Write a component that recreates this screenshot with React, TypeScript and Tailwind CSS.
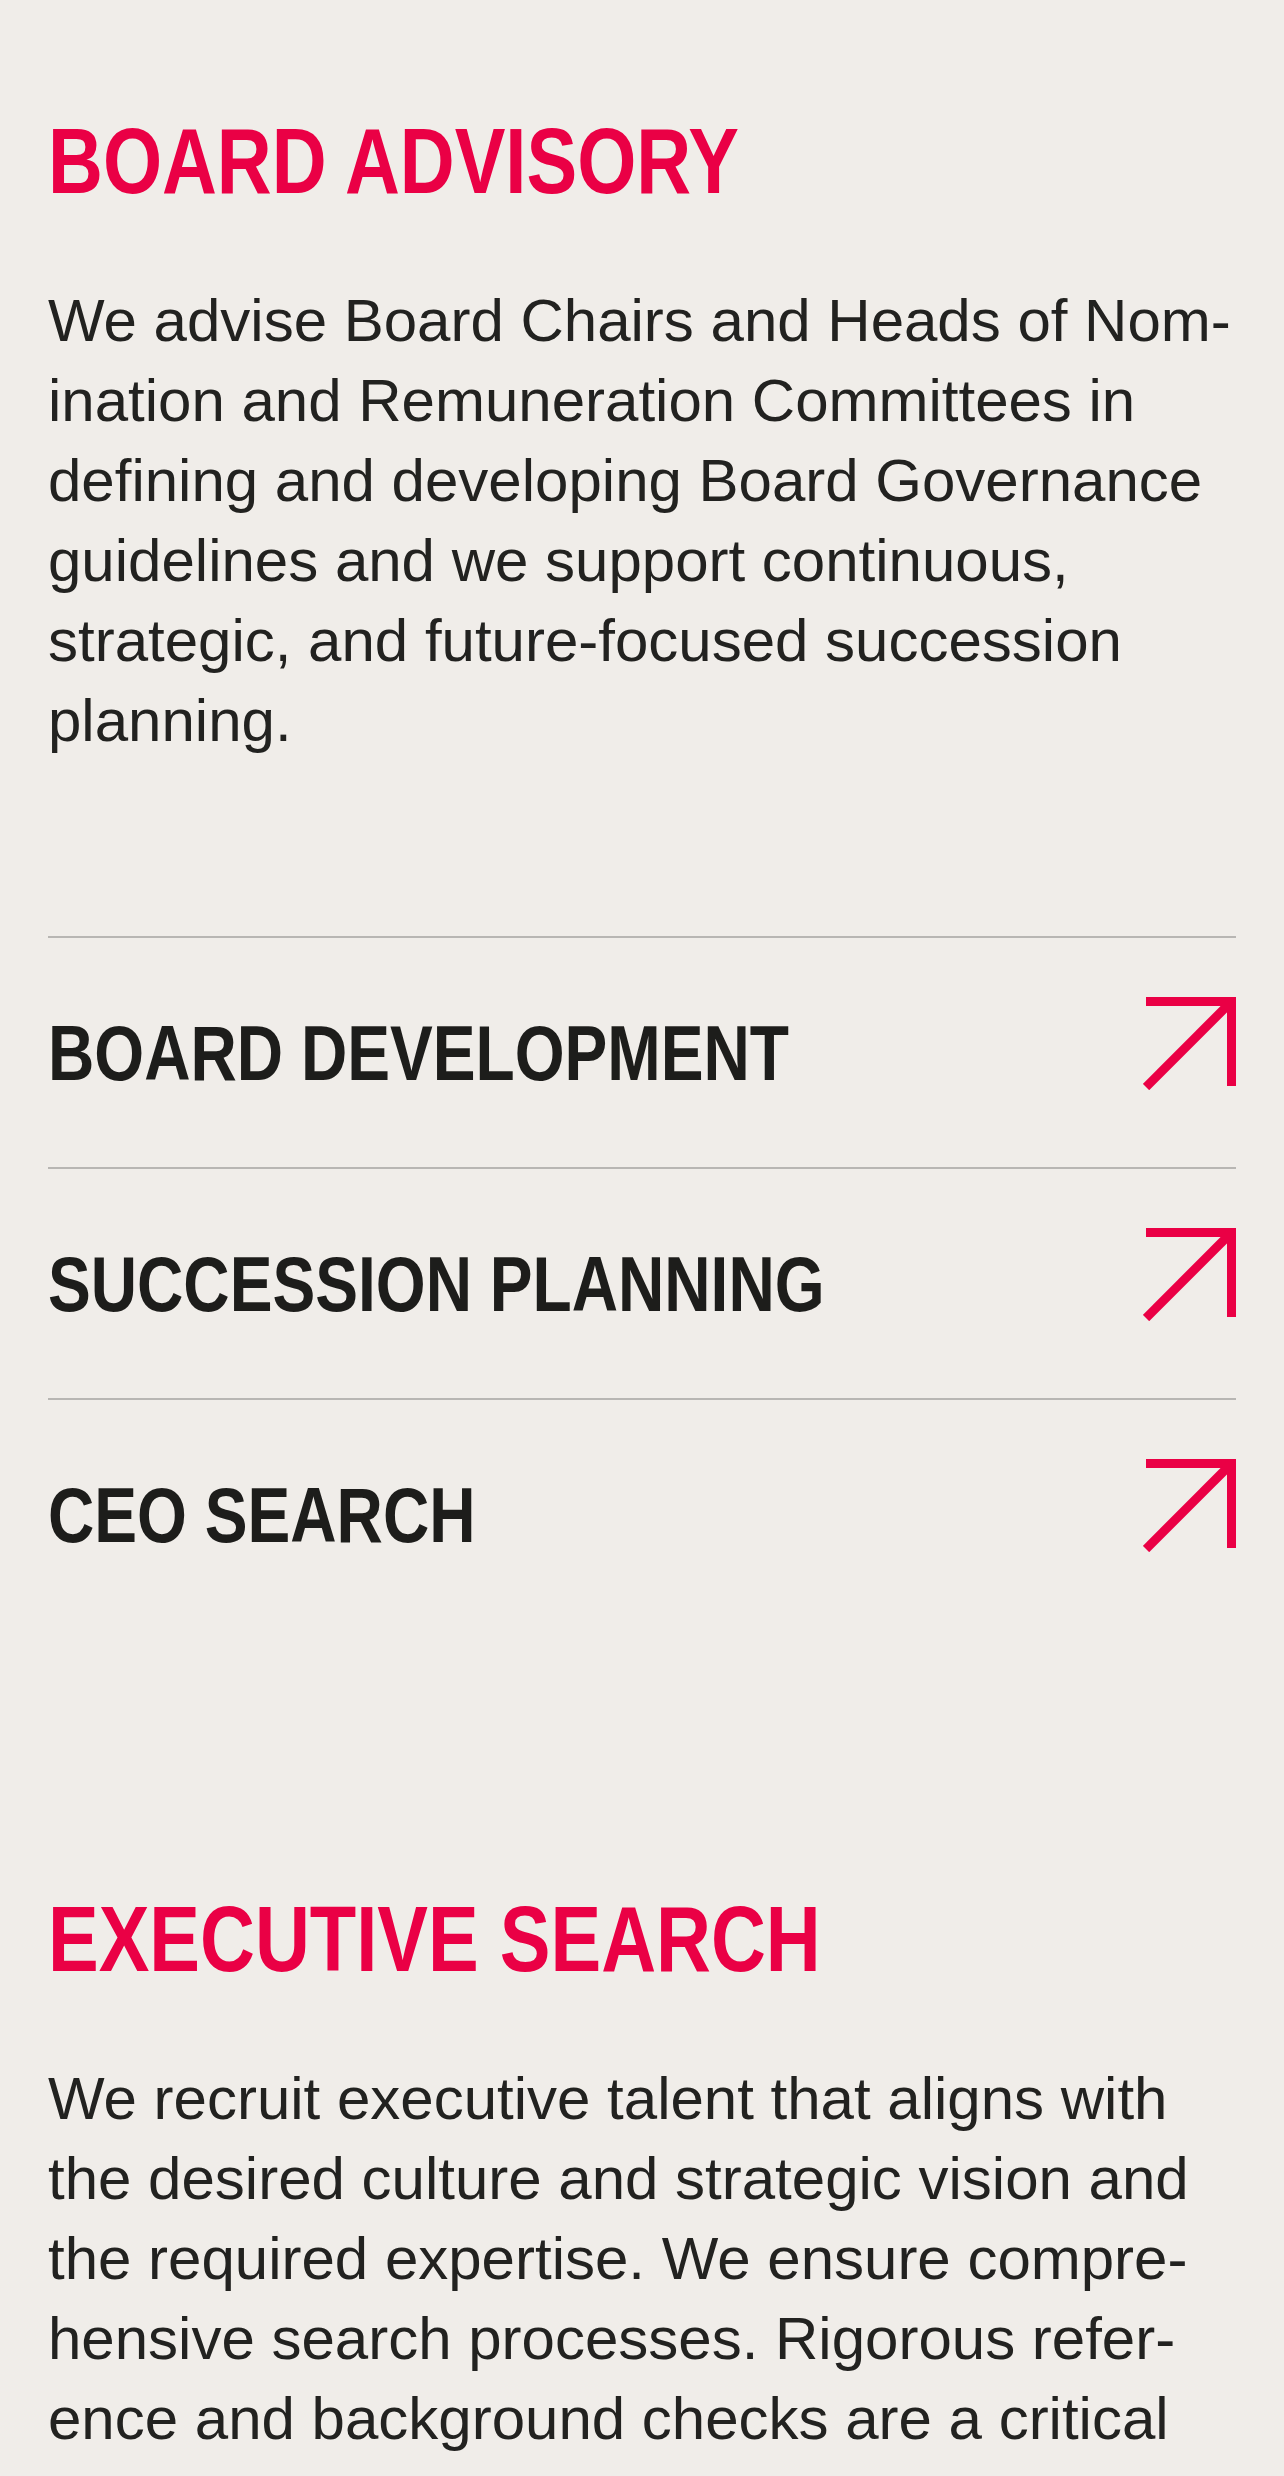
import React from 'react';

type Service = {
  title: string;
};

const boardServices: Service[] = [
  { title: 'BOARD DEVELOPMENT' },
  { title: 'SUCCESSION PLANNING' },
  { title: 'CEO SEARCH' },
];

const boardText = [
  'We advise Board Chairs and Heads of Nom-',
  'ination and Remuneration Committees in',
  'defining and developing Board Governance',
  'guidelines and we support continuous,',
  'strategic, and future-focused succession',
  'planning.',
];

const executiveText = [
  'We recruit executive talent that aligns with',
  'the desired culture and strategic vision and',
  'the required expertise. We ensure compre-',
  'hensive search processes. Rigorous refer-',
  'ence and background checks are a critical',
];

const ArrowIcon: React.FC = () => (
  <svg width="93" height="93" viewBox="0 0 93 93" fill="none" className="shrink-0 mb-[18px]">
    <path d="M3 4.5H88.5V89" stroke="#ea0045" strokeWidth="9" strokeLinejoin="miter" />
    <path d="M88.5 4.5L3 90" stroke="#ea0045" strokeWidth="9" />
  </svg>
);

// no condensed face installed, so the bold face is squeezed horizontally
const Heading: React.FC<{ children: React.ReactNode }> = ({ children }) => (
  <h2 className="font-['Liberation_Sans',Arial,sans-serif] font-bold text-[92px] leading-none text-[#ea0045]">
    <span className="inline-block origin-left scale-x-[0.826] whitespace-nowrap">{children}</span>
  </h2>
);

const Paragraph: React.FC<{ lines: string[] }> = ({ lines }) => (
  <p className="mt-[74px] font-['Liberation_Sans',Arial,sans-serif] text-[60px] leading-[80px] text-[#222220] whitespace-nowrap">
    {lines.map((line, i) => (
      <span key={i} className="block">
        {line}
      </span>
    ))}
  </p>
);

const App: React.FC = () => {
  return (
    <div className="h-[2476px] overflow-hidden bg-[#f0ede9]">
      <div className="px-[48px] pt-[115px]">
        <section>
          <Heading>BOARD ADVISORY</Heading>
          <Paragraph lines={boardText} />

          <ul className="mt-[175px]">
            {boardServices.map(service => (
              <li
                key={service.title}
                className="h-[231px] border-t-2 border-[#b8b6b3] flex items-center justify-between"
              >
                <span className="font-['Liberation_Sans',Arial,sans-serif] font-bold text-[78px] leading-none text-[#1d1d1b]">
                  <span className="inline-block origin-left scale-x-[0.822] whitespace-nowrap">
                    {service.title}
                  </span>
                </span>
                <ArrowIcon />
              </li>
            ))}
          </ul>
        </section>

        <section className="mt-[264px]">
          <Heading>EXECUTIVE SEARCH</Heading>
          <Paragraph lines={executiveText} />
        </section>
      </div>
    </div>
  );
};

export default App;
